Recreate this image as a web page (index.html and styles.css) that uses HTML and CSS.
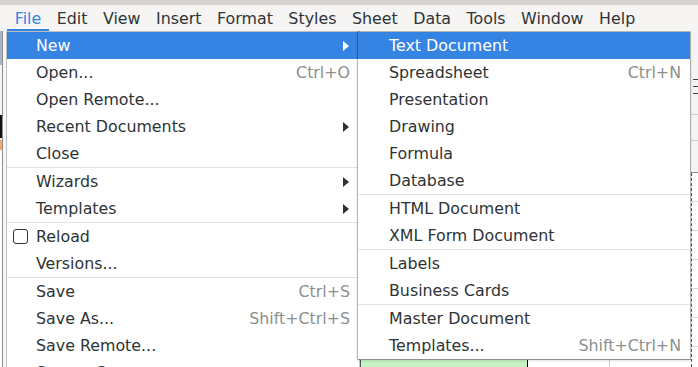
FILE: index.html
```html
<!DOCTYPE html>
<html lang="en">
<head>
<meta charset="utf-8">
<title>File menu</title>
<link rel="stylesheet" href="styles.css">
</head>
<body>
<div class="app">
  <div class="topstrip"></div>
  <nav class="menubar">
    <span class="mb-item active">File</span>
    <span class="mb-item">Edit</span>
    <span class="mb-item">View</span>
    <span class="mb-item">Insert</span>
    <span class="mb-item">Format</span>
    <span class="mb-item">Styles</span>
    <span class="mb-item">Sheet</span>
    <span class="mb-item">Data</span>
    <span class="mb-item">Tools</span>
    <span class="mb-item">Window</span>
    <span class="mb-item">Help</span>
  </nav>
  <div class="workspace">
    <div class="leftcol">
      <div class="lc-blocks">
        <div class="lc-blue"></div>
        <div class="lc-gap1"></div>
        <div class="lc-black"></div>
        <div class="lc-gap2"></div>
        <div class="lc-orange"></div>
        <div class="lc-gap3"></div>
      </div>
      <div class="lc-line"></div>
      <div class="lc-pad"></div>
    </div>
    <div class="main">
      <div class="toolbars"></div>
      <div class="sheet">
        <div class="sheet-fill"></div>
        <div class="sheet-row">
          <div class="cell-gap"></div>
          <div class="cell-green"></div>
          <div class="cell-white"></div>
          <div class="cell-white2"></div>
        </div>
      </div>
    </div>
    <div class="rightcol">
      <div class="rc-a"></div>
      <div class="rc-lines"></div>
      <div class="rc-b"></div>
      <div class="rc-c"></div>
      <div class="rc-d"></div>
      <div class="rc-grid"></div>
    </div>
  </div>

  <div class="menu file-menu">
    <div class="row hl"><span class="label">New</span><span class="arrow"></span></div>
    <div class="row"><span class="label">Open...</span><span class="accel">Ctrl+O</span></div>
    <div class="row"><span class="label">Open Remote...</span></div>
    <div class="row"><span class="label">Recent Documents</span><span class="arrow"></span></div>
    <div class="row"><span class="label">Close</span></div>
    <div class="sep"></div>
    <div class="row"><span class="label">Wizards</span><span class="arrow"></span></div>
    <div class="row"><span class="label">Templates</span><span class="arrow"></span></div>
    <div class="sep"></div>
    <div class="row row-check"><span class="check"></span><span class="label">Reload</span></div>
    <div class="row"><span class="label">Versions...</span></div>
    <div class="sep"></div>
    <div class="row"><span class="label">Save</span><span class="accel">Ctrl+S</span></div>
    <div class="row"><span class="label">Save As...</span><span class="accel">Shift+Ctrl+S</span></div>
    <div class="row"><span class="label">Save Remote...</span></div>
    <div class="row"><span class="label">Save a Copy...</span></div>
  </div>

  <div class="menu sub-menu">
    <div class="row hl"><span class="label">Text Document</span></div>
    <div class="row"><span class="label">Spreadsheet</span><span class="accel">Ctrl+N</span></div>
    <div class="row"><span class="label">Presentation</span></div>
    <div class="row"><span class="label">Drawing</span></div>
    <div class="row"><span class="label">Formula</span></div>
    <div class="row"><span class="label">Database</span></div>
    <div class="sep"></div>
    <div class="row"><span class="label">HTML Document</span></div>
    <div class="row"><span class="label">XML Form Document</span></div>
    <div class="sep"></div>
    <div class="row"><span class="label">Labels</span></div>
    <div class="row"><span class="label">Business Cards</span></div>
    <div class="sep"></div>
    <div class="row"><span class="label">Master Document</span></div>
    <div class="row"><span class="label">Templates...</span><span class="accel">Shift+Ctrl+N</span></div>
  </div>
</div>
</body>
</html>
```

FILE: styles.css
```css
html, body {
  margin: 0;
  padding: 0;
  overflow: hidden;
  background: #ffffff;
}

body {
  font-family: "DejaVu Sans", "Liberation Sans", sans-serif;
  font-size: 15.85px;
  color: #2e3436;
}

.app {
  position: relative;
  width: 698px;
  height: 367px;
  display: flex;
  flex-direction: column;
  overflow: hidden;
}

.topstrip {
  height: 5px;
  background: #d6d2ce;
  flex: none;
}

.menubar {
  height: 26px;
  flex: none;
  display: flex;
  align-items: stretch;
  padding-left: 7px;
  background: #f6f5f4;
}

.mb-item {
  display: flex;
  align-items: center;
  padding: 0 7.75px;
  white-space: nowrap;
}

.mb-item.active {
  color: #3584e4;
  box-shadow: inset 0 -2px 0 #3584e4;
}

/* background application */
.workspace {
  flex: 1;
  display: flex;
  min-height: 0;
}

.leftcol {
  width: 7px;
  flex: none;
  display: flex;
}

.lc-blocks {
  width: 2px;
  display: flex;
  flex-direction: column;
}

.lc-blue { height: 34px; background: #a9b4c6; }
.lc-gap1 { height: 50px; background: #f4f4f4; }
.lc-black { height: 23px; background: #111111; }
.lc-gap2 { height: 2px; background: #f4f4f4; }
.lc-orange { height: 10px; background: #f2a96b; }
.lc-gap3 { flex: 1; background: #ffffff; }

.lc-line {
  width: 1px;
  background: #8c8c8c;
}

.lc-pad {
  flex: 1;
  background: #f7f7f7;
}

.main {
  flex: 1;
  display: flex;
  flex-direction: column;
}

.toolbars {
  height: 139px;
  background: #f4f3f2;
}

.sheet {
  flex: 1;
  display: flex;
  flex-direction: column;
  background: #ffffff;
}

.sheet-fill { flex: 1; }

.sheet-row {
  height: 7px;
  display: flex;
  border-top: 1px solid #d0d0d0;
}

.cell-gap { width: 353px; }

.cell-green {
  width: 166px;
  background: #c4f2c2;
  border-left: 1px solid #555555;
  border-right: 1px solid #000000;
}

.cell-white {
  width: 81px;
  border-right: 1px solid #d0d0d0;
}

.cell-white2 { flex: 1; }

.rightcol {
  width: 7px;
  flex: none;
  display: flex;
  flex-direction: column;
  background: #f4f4f4;
}

.rc-a { height: 48px; }

.rc-lines {
  height: 18px;
  margin-left: 2px;
  background: repeating-linear-gradient(to bottom, #444444 0 1px, transparent 1px 7px);
}

.rc-b {
  height: 17px;
  border-bottom: 1px solid #cfcfcf;
}

.rc-c {
  height: 25px;
  border-bottom: 1px solid #cfcfcf;
}

.rc-d {
  height: 31px;
  border-bottom: 1px solid #8a8a8a;
}

.rc-grid {
  flex: 1;
  background:
    repeating-linear-gradient(to bottom, transparent 0 28px, #d6d6d6 28px 29px) #ffffff;
  border-left: 1px dashed #555555;
}

/* menus (popups over the app) */
.menu {
  position: absolute;
  top: 31px;
  background: #ffffff;
  background-clip: padding-box;
  border: 1px solid rgba(0, 0, 0, 0.22);
  display: flex;
  flex-direction: column;
}

.file-menu {
  left: 6px;
  width: 352px;
}

.sub-menu {
  left: 357px;
  width: 332px;
  box-shadow: 0 1px 2px rgba(0, 0, 0, 0.12);
}

.row {
  height: 27px;
  flex: none;
  display: flex;
  align-items: center;
  white-space: nowrap;
}

.file-menu .row {
  padding: 0 9px 0 29px;
}

.sub-menu .row {
  padding: 0 9px 0 31px;
}

.file-menu .row.row-check {
  padding-left: 6px;
}

.row.hl {
  background: #3584e4;
  color: #ffffff;
}

.label {
  flex: 1;
}

.accel {
  color: #8d8f8c;
}

.arrow {
  width: 0;
  height: 0;
  border-left: 6px solid #2e3436;
  border-top: 5px solid transparent;
  border-bottom: 5px solid transparent;
  margin-right: 1px;
}

.row.hl .arrow {
  border-left-color: #ffffff;
}

.check {
  width: 13px;
  height: 13px;
  border: 1px solid #2e3436;
  border-radius: 3px;
  margin-right: 8px;
  flex: none;
}

.sep {
  height: 1px;
  flex: none;
  background: #e1e1e1;
}
```
